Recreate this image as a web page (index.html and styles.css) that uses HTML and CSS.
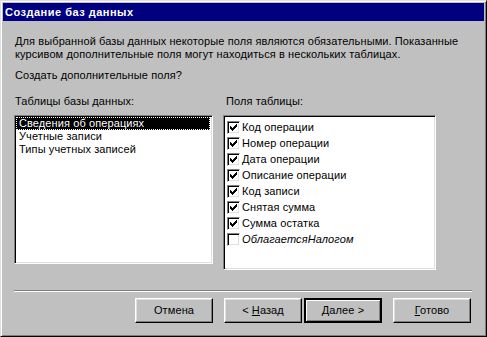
FILE: index.html
```html
<!DOCTYPE html>
<html lang="ru">
<head>
  <meta charset="UTF-8">
  <title>Создание баз данных</title>
  <link rel="stylesheet" href="styles.css">
</head>
<body>
  <div class="window">
    <div class="titlebar">Создание баз данных</div>
    <div class="content">
      <p class="intro">Для выбранной базы данных некоторые поля являются обязательными. Показанные<br>курсивом дополнительные поля могут находиться в нескольких таблицах.</p>
      <p class="question">Создать дополнительные поля?</p>

      <div class="columns">
        <div class="col col-tables">
          <div class="label">Таблицы базы данных:</div>
          <ul class="listbox tables">
            <li class="selected">Сведения об операциях</li>
            <li>Учетные записи</li>
            <li>Типы учетных записей</li>
          </ul>
        </div>
        <div class="col col-fields">
          <div class="label label-fields">Поля таблицы:</div>
          <ul class="listbox fields">
            <li><span class="check checked"><svg width="7" height="7" viewBox="0 0 7 7"><path d="M0 2h1v1h1v1h1v-1h1v-1h1v-1h1v-1h1v3h-1v1h-1v1h-1v1h-1v1h-1v-1h-1v-1h-1z"/></svg></span>Код операции</li>
            <li><span class="check checked"><svg width="7" height="7" viewBox="0 0 7 7"><path d="M0 2h1v1h1v1h1v-1h1v-1h1v-1h1v-1h1v3h-1v1h-1v1h-1v1h-1v1h-1v-1h-1v-1h-1z"/></svg></span>Номер операции</li>
            <li><span class="check checked"><svg width="7" height="7" viewBox="0 0 7 7"><path d="M0 2h1v1h1v1h1v-1h1v-1h1v-1h1v-1h1v3h-1v1h-1v1h-1v1h-1v1h-1v-1h-1v-1h-1z"/></svg></span>Дата операции</li>
            <li><span class="check checked"><svg width="7" height="7" viewBox="0 0 7 7"><path d="M0 2h1v1h1v1h1v-1h1v-1h1v-1h1v-1h1v3h-1v1h-1v1h-1v1h-1v1h-1v-1h-1v-1h-1z"/></svg></span>Описание операции</li>
            <li><span class="check checked"><svg width="7" height="7" viewBox="0 0 7 7"><path d="M0 2h1v1h1v1h1v-1h1v-1h1v-1h1v-1h1v3h-1v1h-1v1h-1v1h-1v1h-1v-1h-1v-1h-1z"/></svg></span>Код записи</li>
            <li><span class="check checked"><svg width="7" height="7" viewBox="0 0 7 7"><path d="M0 2h1v1h1v1h1v-1h1v-1h1v-1h1v-1h1v3h-1v1h-1v1h-1v1h-1v1h-1v-1h-1v-1h-1z"/></svg></span>Снятая сумма</li>
            <li><span class="check checked"><svg width="7" height="7" viewBox="0 0 7 7"><path d="M0 2h1v1h1v1h1v-1h1v-1h1v-1h1v-1h1v3h-1v1h-1v1h-1v1h-1v1h-1v-1h-1v-1h-1z"/></svg></span>Сумма остатка</li>
            <li class="optional"><span class="check"></span>ОблагаетсяНалогом</li>
          </ul>
        </div>
      </div>

      <div class="separator"></div>

      <div class="buttons">
        <button type="button" class="btn">Отмена</button>
        <button type="button" class="btn btn-back">&lt; <u>Н</u>азад</button>
        <button type="button" class="btn btn-default"><u>Д</u>алее &gt;</button>
        <button type="button" class="btn btn-finish"><u>Г</u>отово</button>
      </div>
    </div>
  </div>
</body>
</html>
```

FILE: styles.css
```css
html, body {
  margin: 0;
  padding: 0;
}
body {
  font-family: "Liberation Sans", Arial, sans-serif;
  font-size: 11px;
  line-height: 13px;
  letter-spacing: 0.1px;
  color: #000;
  background: #c0c0c0;
}
.window {
  width: 487px;
  height: 337px;
  box-sizing: border-box;
  background: #c0c0c0;
  border: 1px solid;
  border-color: #dfdfdf #000 #000 #dfdfdf;
  box-shadow: inset 1px 1px #fff, inset -1px -1px #808080;
  padding: 2px;
}
.titlebar {
  height: 18px;
  line-height: 18px;
  background: #000080;
  color: #fff;
  font-weight: bold;
  letter-spacing: 0.5px;
  padding-left: 2px;
}
.content {
  padding: 14px 11px 0 11px;
}
.intro {
  margin: 0 0 8px 0;
  padding-left: 1px;
}
.question {
  margin: 0 0 13px 0;
  padding-left: 1px;
}
.columns {
  display: flex;
  gap: 10px;
}
.col-tables {
  width: 199px;
}
.col-fields {
  width: 213px;
}
.label {
  padding-left: 1px;
  margin-bottom: 7px;
}
.label-fields {
  padding-left: 3px;
}
.listbox {
  list-style: none;
  margin: 0;
  padding: 0;
  background: #fff;
  border: 1px solid;
  border-color: #808080 #fff #fff #808080;
  box-shadow: inset 1px 1px #000, inset -1px -1px #dfdfdf;
  box-sizing: border-box;
}
.tables {
  height: 149px;
  padding: 1px 2px 2px 1px;
}
.tables li {
  height: 13px;
  padding-left: 3px;
}
.tables li.selected {
  background: #000;
  color: #fff;
  outline: 1px dotted #fff;
  outline-offset: -1px;
}
.fields {
  height: 155px;
  padding: 3px 2px 2px 3px;
}
.fields li {
  height: 16px;
  display: flex;
  align-items: center;
  gap: 2px;
}
.fields li.optional {
  font-style: italic;
}
.check {
  width: 13px;
  height: 13px;
  box-sizing: border-box;
  border: 1px solid;
  border-color: #808080 #fff #fff #808080;
  box-shadow: inset 1px 1px #000, inset -1px -1px #dfdfdf;
  background: #fff;
  display: flex;
  padding: 2px 0 0 2px;
  flex: none;
}
.check svg {
  shape-rendering: crispEdges;
  fill: #000;
}
.separator {
  margin-top: 20px;
  height: 1px;
  width: 458px;
  background: #808080;
  border-bottom: 1px solid #fff;
}
.buttons {
  display: flex;
  justify-content: flex-end;
  margin-top: 6px;
  padding-right: 2px;
}
.btn {
  width: 78px;
  height: 25px;
  font: inherit;
  letter-spacing: inherit;
  color: #000;
  background: #c0c0c0;
  border: 1px solid;
  border-color: #fff #000 #000 #fff;
  box-shadow: inset -1px -1px #808080, inset 1px 1px #dfdfdf;
  padding: 0;
  margin-left: 11px;
  cursor: pointer;
}
.btn-default {
  margin-left: 2px;
  border: 2px solid #000;
  box-shadow: inset 1px 1px #fff, inset -1px -1px #808080;
}
.btn u {
  text-decoration: underline;
}
```
